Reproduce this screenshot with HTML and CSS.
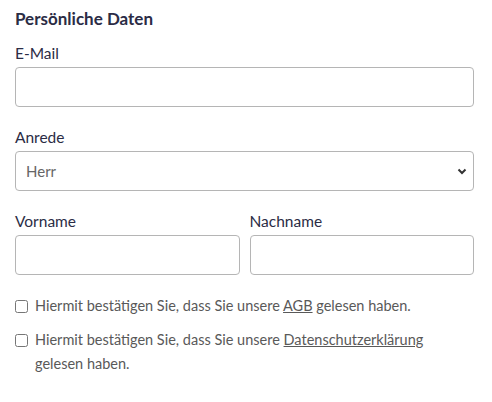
FILE: index.html
```html
<!DOCTYPE html>
<html lang="de">
<head>
    <meta charset="UTF-8">
    <meta name="viewport" content="width=device-width, initial-scale=1.0">
    <title>Persönliche Daten</title>
    <link rel="stylesheet" href="styles.css">
</head>
<body>
    <form class="form">
        <h2 class="form-title">Persönliche Daten</h2>

        <div class="field">
            <label for="email">E-Mail</label>
            <input type="email" id="email">
        </div>

        <div class="field">
            <label for="anrede">Anrede</label>
            <div class="select-wrap">
                <select id="anrede">
                    <option>Herr</option>
                    <option>Frau</option>
                </select>
                <svg class="chevron" width="10" height="7" viewBox="0 0 10 7">
                    <path d="M1.5 1.5 L5 5 L8.5 1.5" fill="none" stroke="#333" stroke-width="2"/>
                </svg>
            </div>
        </div>

        <div class="row">
            <div class="field">
                <label for="vorname">Vorname</label>
                <input type="text" id="vorname">
            </div>
            <div class="field">
                <label for="nachname">Nachname</label>
                <input type="text" id="nachname">
            </div>
        </div>

        <div class="checks">
            <label class="check">
                <input type="checkbox">
                <span>Hiermit bestätigen Sie, dass Sie unsere <a href="#">AGB</a> gelesen haben.</span>
            </label>
            <label class="check">
                <input type="checkbox">
                <span>Hiermit bestätigen Sie, dass Sie unsere <a href="#">Datenschutzerklärung</a> gelesen haben.</span>
            </label>
        </div>
    </form>
</body>
</html>
```

FILE: styles.css
```css
body {
    margin: 0;
    padding: 7px 18px 0 15px;
    font-family: Lato, "Open Sans", sans-serif;
    background-color: #fff;
    color: #2b2c45;
}

.form-title {
    font-size: 17px;
    font-weight: 700;
    margin: 0 0 12px;
    line-height: 24px;
}

.field {
    display: flex;
    flex-direction: column;
    margin-bottom: 20px;
}

.field label {
    font-size: 15.5px;
    line-height: 20px;
    margin-bottom: 4px;
}

.field input,
.field select {
    box-sizing: border-box;
    width: 100%;
    height: 40px;
    border: 1px solid #b5b5b5;
    border-radius: 4px;
    font-family: inherit;
    font-size: 15px;
    padding: 0 10px;
    background: #fff;
    color: #666;
}

.select-wrap {
    position: relative;
}

.field select {
    appearance: none;
}

.chevron {
    position: absolute;
    right: 7px;
    top: 17px;
    pointer-events: none;
}

.row {
    display: grid;
    grid-template-columns: 1fr 1fr;
    gap: 10px;
}

.checks {
    display: flex;
    flex-direction: column;
    gap: 10px;
    margin-top: -1px;
}

.check {
    display: flex;
    align-items: flex-start;
    gap: 7px;
    font-size: 14.5px;
    line-height: 24px;
    color: #595959;
}

.check input {
    margin: 6px 0 0;
    width: 13px;
    height: 13px;
    flex-shrink: 0;
}

.check a {
    color: #595959;
}
```
